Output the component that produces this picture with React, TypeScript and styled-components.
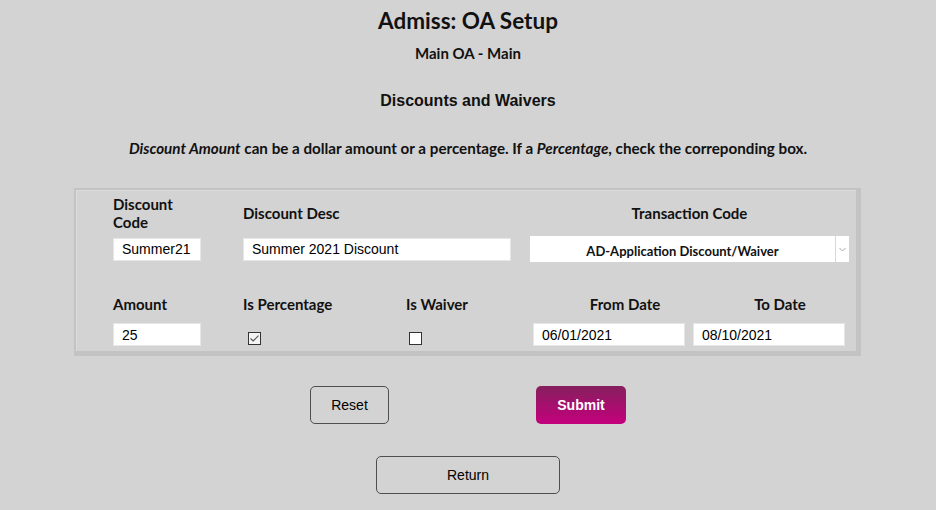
import { FC } from 'react';
import { styled, createGlobalStyle } from 'styled-components';

const GlobalStyle = createGlobalStyle`
    html, body {
        margin: 0;
        padding: 0;
        background: #d3d3d3;
    }
    body {
        font-family: Lato, "Noto Sans", sans-serif;
        color: #111;
    }
`;

const Page = styled.div`
    width: 936px;
    height: 510px;
    display: flex;
    flex-direction: column;
    align-items: center;
    overflow: hidden;
`;

const Title = styled.h1`
    margin: 9px 0 0;
    font-size: 22.5px;
    line-height: 24px;
    font-weight: 700;
`;

const SubTitle = styled.h2`
    margin: 12px 0 0;
    font-size: 15px;
    line-height: 16px;
    font-weight: 700;
`;

const Section = styled.h3`
    margin: 30px 0 0;
    font-family: "Liberation Sans", Arial, sans-serif;
    font-size: 16px;
    line-height: 20px;
    font-weight: 700;
`;

const Note = styled.p`
    margin: 28px 0 0;
    font-size: 15.2px;
    line-height: 18px;
    font-weight: 700;

    em {
        font-style: italic;
    }
`;

const Panel = styled.div`
    margin-top: 31px;
    align-self: flex-start;
    margin-left: 74px;
    width: 780px;
    height: 161px;
    border-top: 2px solid #c3c3c3;
    border-left: 2px solid #c3c3c3;
    border-right: 5px solid #c3c3c3;
    border-bottom: 5px solid #c3c3c3;
    box-shadow: inset 1px 1px 0 #dcdcdc;
    box-sizing: content-box;
`;

const Row = styled.div<{ $cols: string; $top: number; $gap: number }>`
    display: grid;
    grid-template-columns: ${p => p.$cols};
    grid-template-rows: 36px auto;
    row-gap: ${p => p.$gap}px;
    padding-left: 37px;
    margin-top: ${p => p.$top}px;
`;

const Label = styled.div<{ $center?: boolean; $shift?: number }>`
    display: flex;
    align-items: center;
    justify-content: ${p => (p.$center ? 'center' : 'flex-start')};
    padding-left: ${p => p.$shift || 0}px;
    font-size: 15px;
    line-height: 18px;
    font-weight: 700;
`;

const Cell = styled.div`
    display: flex;
    align-items: center;
`;

const TextBox = styled.div<{ $w: number }>`
    width: ${p => p.$w}px;
    height: 23px;
    box-sizing: border-box;
    background: #fff;
    border: 1px solid #e6e6e6;
    padding-left: 8px;
    display: flex;
    align-items: center;
    font-family: "Liberation Sans", Arial, sans-serif;
    font-size: 14px;
    color: #000;
`;

const Select = styled.div`
    width: 319px;
    height: 26px;
    box-sizing: border-box;
    background: #fff;
    display: flex;
    align-items: stretch;
`;

const SelectText = styled.div`
    flex: 1;
    display: flex;
    align-items: center;
    justify-content: center;
    padding-top: 3px;
    font-size: 13px;
    font-weight: 700;
    color: #111;
`;

const SelectArrow = styled.div`
    width: 13px;
    border-left: 1px solid #d8d8d8;
    display: flex;
    align-items: center;
    justify-content: center;
`;

const Check = styled.div<{ $checked?: boolean }>`
    width: 13px;
    height: 13px;
    box-sizing: border-box;
    border: 1px solid #333;
    background: ${p => (p.$checked ? '#f4f4f4' : '#fff')};
    margin: 7px 0 0 ${p => (p.$checked ? 5 : 3)}px;
    display: flex;
    align-items: center;
    justify-content: center;
`;

const Buttons = styled.div`
    display: flex;
    gap: 147px;
    margin-top: 30px;
`;

const Button = styled.button<{ $w: number; $primary?: boolean }>`
    width: ${p => p.$w}px;
    height: 38px;
    border-radius: 5px;
    font-family: "Liberation Sans", Arial, sans-serif;
    font-size: 14px;
    font-weight: ${p => (p.$primary ? 700 : 400)};
    color: ${p => (p.$primary ? '#fff' : '#000')};
    background: ${p => (p.$primary ? 'linear-gradient(#861f5e, #c4007c)' : 'transparent')};
    border: ${p => (p.$primary ? 'none' : '1.5px solid #4e4e4e')};
    cursor: pointer;
`;

const ReturnWrap = styled.div`
    margin-top: 32px;
`;

const CheckBox: FC<{ checked?: boolean }> = ({ checked }) => (
    <Check $checked={checked}>
        {checked && (
            <svg width="9" height="7" viewBox="0 0 9 7">
                <path d="M0.5 3.5 L3.2 6 L8.5 0.6" fill="none" stroke="#555" strokeWidth="1.1" />
            </svg>
        )}
    </Check>
);

export default function App() {
    return (
        <Page>
            <GlobalStyle />
            <Title>Admiss: OA Setup</Title>
            <SubTitle>Main OA - Main</SubTitle>
            <Section>Discounts and Waivers</Section>
            <Note>
                <em>Discount Amount</em> can be a dollar amount or a percentage. If a <em>Percentage</em>, check the correponding box.
            </Note>

            <Panel>
                <Row $cols="130px 287px 319px" $top={5} $gap={5}>
                    <Label>Discount<br />Code</Label>
                    <Label>Discount Desc</Label>
                    <Label $center>Transaction Code</Label>
                    <Cell><TextBox $w={88}>Summer21</TextBox></Cell>
                    <Cell><TextBox $w={268}>Summer 2021 Discount</TextBox></Cell>
                    <Cell>
                        <Select>
                            <SelectText>AD-Application Discount/Waiver</SelectText>
                            <SelectArrow>
                                <svg width="7" height="5" viewBox="0 0 7 5">
                                    <path d="M0.5 1 L3.5 4 L6.5 1" fill="none" stroke="#a8a8a8" strokeWidth="1" />
                                </svg>
                            </SelectArrow>
                        </Select>
                    </Cell>
                </Row>

                <Row $cols="130px 163px 127px 160px 152px" $top={24} $gap={1}>
                    <Label>Amount</Label>
                    <Label>Is Percentage</Label>
                    <Label>Is Waiver</Label>
                    <Label $center $shift={24}>From Date</Label>
                    <Label $center $shift={22}>To Date</Label>
                    <Cell><TextBox $w={88}>25</TextBox></Cell>
                    <Cell><CheckBox checked /></Cell>
                    <Cell><CheckBox /></Cell>
                    <Cell><TextBox $w={152}>06/01/2021</TextBox></Cell>
                    <Cell><TextBox $w={152}>08/10/2021</TextBox></Cell>
                </Row>
            </Panel>

            <Buttons>
                <Button $w={79}>Reset</Button>
                <Button $w={90} $primary>Submit</Button>
            </Buttons>
            <ReturnWrap>
                <Button $w={184}>Return</Button>
            </ReturnWrap>
        </Page>
    );
}
